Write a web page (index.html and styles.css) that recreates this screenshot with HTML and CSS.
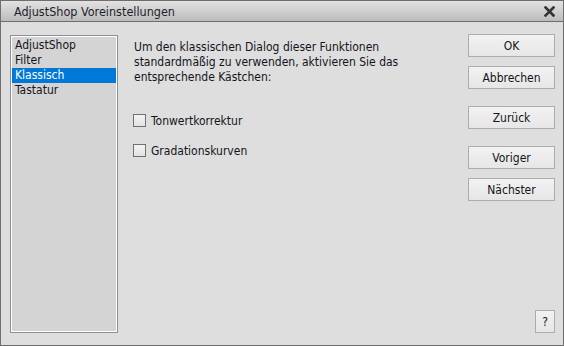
FILE: index.html
```html
<!DOCTYPE html>
<html lang="de">
<head>
    <meta charset="UTF-8">
    <title>AdjustShop Voreinstellungen</title>
    <link rel="stylesheet" href="styles.css">
</head>
<body>
    <div class="dialog">
        <div class="titlebar">
            <span class="title">AdjustShop Voreinstellungen</span>
            <svg class="close" width="11" height="11" viewBox="0 0 11 11">
                <path d="M1.5 1.5 L9.5 9.5 M9.5 1.5 L1.5 9.5" stroke="#333" stroke-width="2.6" stroke-linecap="square"/>
            </svg>
        </div>
        <div class="content">
            <ul class="list">
                <li>AdjustShop</li>
                <li>Filter</li>
                <li class="selected">Klassisch</li>
                <li>Tastatur</li>
            </ul>
            <div class="main">
                <p class="intro">Um den klassischen Dialog dieser Funktionen standardmäßig zu verwenden, aktivieren Sie das entsprechende Kästchen:</p>
                <label class="check"><span class="box"></span>Tonwertkorrektur</label>
                <label class="check"><span class="box"></span>Gradationskurven</label>
            </div>
            <div class="buttons">
                <button class="btn">OK</button>
                <button class="btn gap-small">Abbrechen</button>
                <button class="btn gap-large">Zurück</button>
                <button class="btn gap-large">Voriger</button>
                <button class="btn gap-small">Nächster</button>
                <button class="btn help">?</button>
            </div>
        </div>
    </div>
</body>
</html>
```

FILE: styles.css
```css
body {
    margin: 0;
    font-family: "DejaVu Sans Condensed", "DejaVu Sans", sans-serif;
    font-size: 12px;
    color: #141420;
}
.dialog {
    width: 564px;
    height: 346px;
    box-sizing: border-box;
    border: 1px solid #6e6e6e;
    background-color: #dedede;
    display: flex;
    flex-direction: column;
}
.titlebar {
    height: 20px;
    border-bottom: 1px solid #6e6e6e;
    background: linear-gradient(#e2e2e2, #bcbcbc);
    display: flex;
    align-items: center;
    justify-content: space-between;
    padding: 0 8px 0 13px;
}
.title {
    font-size: 12.5px;
    color: #1e1e2a;
}
.list {
    width: 108px;
    margin: 0;
    padding: 1px 1px;
    list-style: none;
    box-sizing: border-box;
    border: 1px solid #8c8c9c;
    box-shadow: inset 0 0 0 1px #fff;
    background-color: #d4d4d4;
}
.list li {
    height: 15px;
    line-height: 15px;
    padding-left: 3px;
}
.list li:first-child {
    margin-top: 1px;
}
.list li.selected {
    background-color: #0078d7;
    color: #fff;
}
.content {
    flex: 1;
    display: flex;
    padding: 13px 8px 12px 9px;
}
.main {
    flex: 1;
    padding: 5px 0 0 16px;
}
.intro {
    margin: 0 0 28px;
    line-height: 15px;
    width: 285px;
}
.check {
    display: flex;
    align-items: center;
    height: 15px;
    margin-bottom: 15px;
    margin-left: -1px;
}
.box {
    width: 11px;
    height: 11px;
    border: 1px solid #707070;
    background: linear-gradient(#f4f4f4, #e2e2e2);
    margin-right: 5px;
}
.buttons {
    width: 87px;
    margin-top: -1px;
    display: flex;
    flex-direction: column;
    align-items: flex-start;
}
.btn {
    width: 87px;
    height: 23px;
    padding: 0;
    border: 1px solid #adadad;
    background: linear-gradient(#f2f2f2, #e6e6e6);
    font-family: inherit;
    font-size: 12px;
    color: #141420;
}
.gap-small {
    margin-top: 9px;
}
.gap-large {
    margin-top: 17px;
}
.help {
    width: 20px;
    margin-top: auto;
    align-self: flex-end;
}
```
